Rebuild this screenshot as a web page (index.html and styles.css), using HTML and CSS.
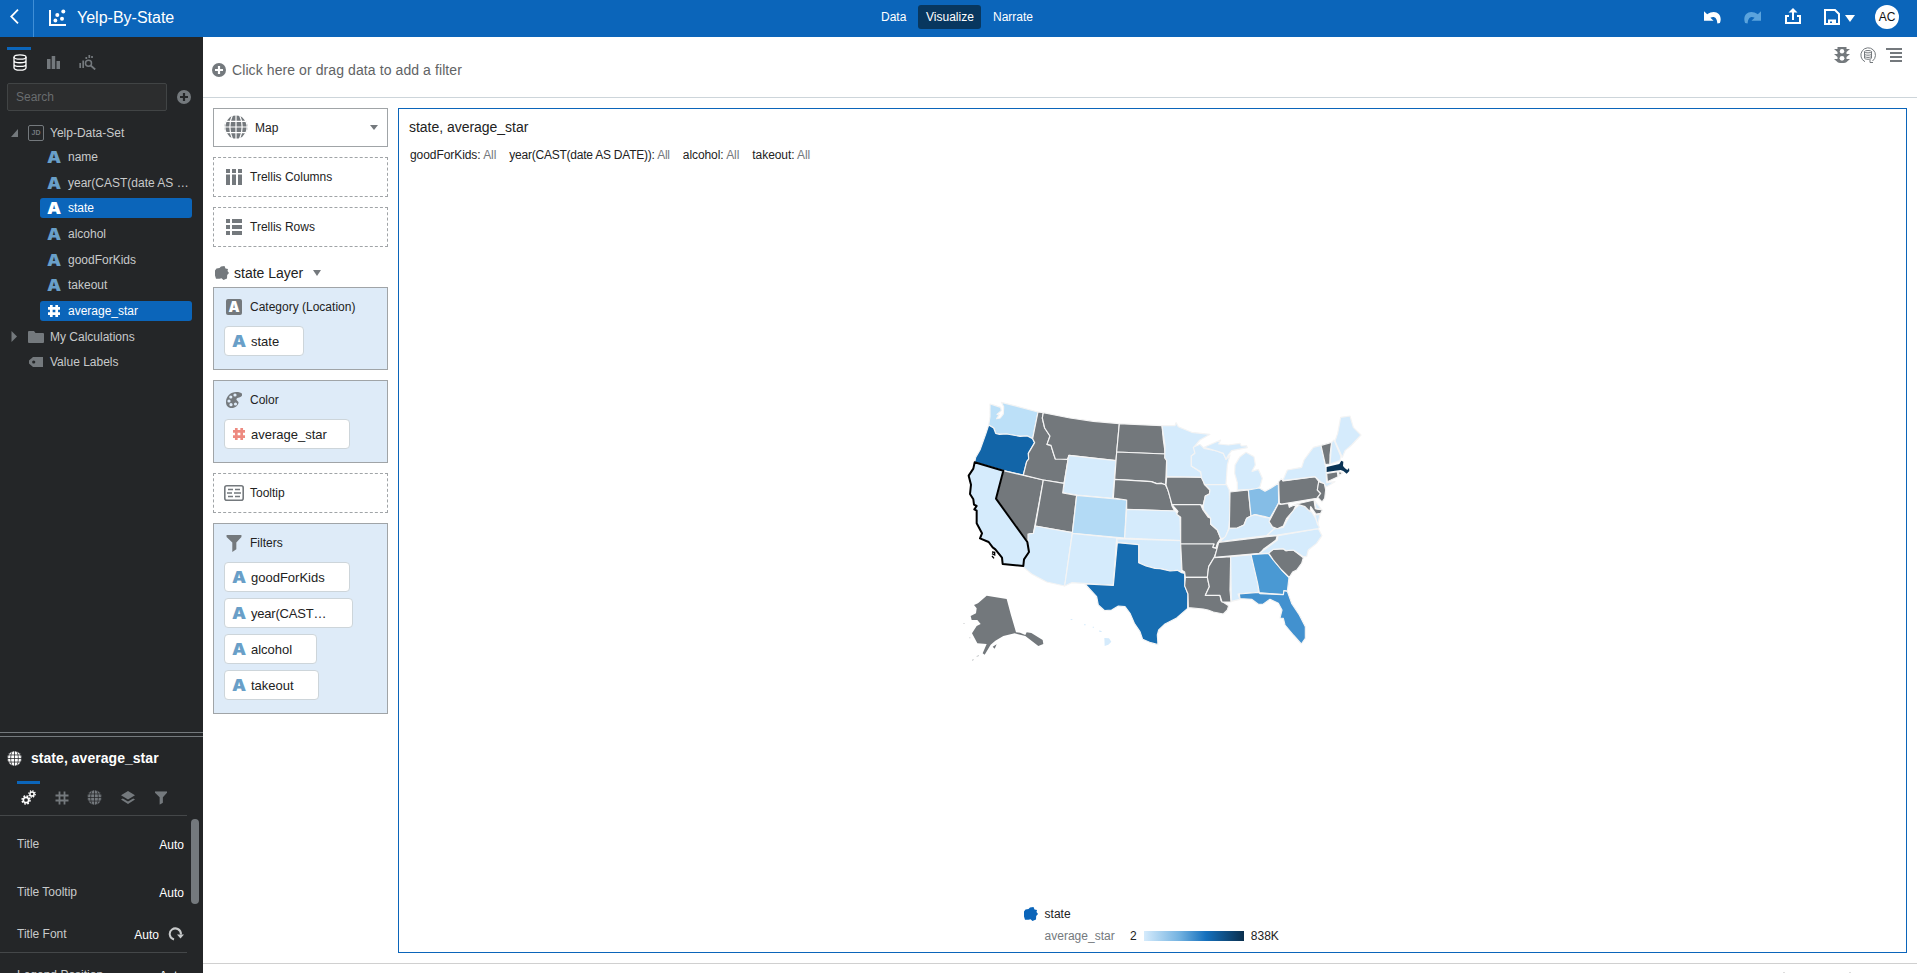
FILE: index.html
```html
<!DOCTYPE html>
<html lang="en">
<head>
<meta charset="utf-8">
<title>Yelp-By-State</title>
<link rel="stylesheet" href="styles.css">
</head>
<body>
<svg class="defs" aria-hidden="true">
  <symbol id="hash" viewBox="0 0 14 14"><path d="M4.300 1v12M9.700 1v12M1 4.300h12M1 9.700h12" fill="none" stroke="currentColor" stroke-width="2.700"/></symbol>
  <symbol id="globe" viewBox="0 0 24 24"><circle cx="12" cy="12" r="11.600" fill="currentColor"/><path d="M12 0v24M0 12h24M2 6.300h20M2 17.700h20M8.500 0C5 7 5 17 8.500 24M15.500 0C19 7 19 17 15.500 24M5 2C-.5 8-.5 16 5 22M19 2c5.500 6 5.500 14 0 20" fill="none" stroke="var(--cut)" stroke-width="1.200"/></symbol>
  <symbol id="plus" viewBox="0 0 14 14"><circle cx="7" cy="7" r="7" fill="currentColor"/><path d="M7 3v8M3 7h8" stroke="var(--cut)" stroke-width="2.200"/></symbol>
  <symbol id="blob" viewBox="0 0 14 14"><path d="M0 4.500 1.500 2.500 4.500 2 6 .5 9.500 0l1 2.500L13 3l-.5 2L14 7l-1.800 2-.2 3.500-3.500 1.500-2-1.800-2 .6H1L0 9.500z" fill="currentColor"/></symbol>
  <symbol id="funnel" viewBox="0 0 14 16"><path d="M0 0h14v1.800L9.200 7v6.500L5.400 16V7L0 1.800z" fill="currentColor"/></symbol>
  <symbol id="undo" viewBox="0 0 16 13"><path d="M0 1v9h9L6 7.300c3-2 6.200-.8 6.600 5.200l2.400-.4C18 4.500 11-1.500 3 4z" fill="currentColor"/></symbol>
</svg>
<header class="top">
  <div class="back"><svg width="9" height="15" viewBox="0 0 9 15"><path d="M8 .7 1.200 7.500 8 14.300" fill="none" stroke="#fff" stroke-width="1.800"/></svg></div>
  <svg class="logo" width="17" height="17" viewBox="0 0 17 17" fill="#fff"><path d="M0 1h2v14h15v2H0z"/><circle cx="6.400" cy="11.500" r="1.900"/><circle cx="8.300" cy="6" r="2"/><circle cx="13" cy="9.700" r="2"/><circle cx="14.300" cy="2.500" r="2"/></svg>
  <h1>Yelp-By-State</h1>
  <nav><a>Data</a><a class="on">Visualize</a><a>Narrate</a></nav>
  <div class="actions">
    <svg width="17" height="14"><use href="#undo"/></svg>
    <svg class="redo" width="17" height="14"><use href="#undo"/></svg>
    <svg class="share" width="16" height="16" viewBox="0 0 16 16"><path d="M4 8H1v7h14V8h-3M8 12V3" fill="none" stroke="#fff" stroke-width="2"/><path d="M8 0 3.500 4.500h9z" fill="#fff"/></svg>
    <svg class="save" width="16" height="16" viewBox="0 0 16 16" fill="none" stroke="#fff" stroke-width="2"><path d="M1 1h10l4 4v10H1zM5 15v-3.500h6V15M9 12v3"/></svg>
    <i class="caret"></i>
    <span class="avatar">AC</span>
  </div>
</header>
<div class="body">
<aside>
  <div class="tabs">
    <span class="on"><svg width="14" height="17" viewBox="0 0 14 17" fill="none" stroke="#fff" stroke-width="1.300"><ellipse cx="7" cy="3" rx="6" ry="2.200"/><path d="M1 3v10.700C1 17 13 17 13 13.700V3M1 6.500c0 3 12 3 12 0M1 10.200c0 3 12 3 12 0"/></svg></span>
    <span><svg width="13" height="13" viewBox="0 0 13 13" fill="#74797d"><path d="M0 3h3.500v10H0zM4.700 0h3.500v13H4.700zM9.500 5H13v8H9.500z"/></svg></span>
    <span><svg width="17" height="15" viewBox="0 0 17 15" fill="none" stroke="#74797d"><path d="M1.200 8v5M4.200 5.500V13M7.300 2v2M10.300 3V0M13 3V1" stroke-width="1.700"/><circle cx="9.500" cy="8.300" r="3" stroke-width="1.500"/><path d="m11.700 10.500 4.500 4" stroke-width="1.800"/></svg></span>
  </div>
  <div class="find"><div class="search">Search</div><svg class="add" width="14" height="14"><use href="#plus"/></svg></div>
  <div class="tree">
    <div class="node root"><svg width="7" height="8" viewBox="0 0 7 8"><path d="M7 0v8H0z" fill="#74797d"/></svg><b class="jd">JD</b><span>Yelp-Data-Set</span></div>
    <div class="leaf"><b class="a">A</b>name</div>
    <div class="leaf"><b class="a">A</b>year(CAST(date AS …</div>
    <div class="leaf sel"><b class="a">A</b>state</div>
    <div class="leaf"><b class="a">A</b>alcohol</div>
    <div class="leaf"><b class="a">A</b>goodForKids</div>
    <div class="leaf"><b class="a">A</b>takeout</div>
    <div class="leaf sel"><svg class="hash" width="14" height="14"><use href="#hash"/></svg>average_star</div>
    <div class="node"><svg width="7" height="11" viewBox="0 0 7 11"><path d="m.5 0 5.500 5.500L.5 11z" fill="#74797d"/></svg><svg width="16" height="12" viewBox="0 0 16 12"><path d="M0 1q0-1 1-1h5l1.500 2H15q1 0 1 1v8q0 1-1 1H1q-1 0-1-1z" fill="#74797d"/></svg><span>My Calculations</span></div>
    <div class="node"><i></i><svg width="16" height="10" viewBox="0 0 16 10"><path d="M5 0h10v10H5L1 6.500v-3z" fill="#74797d"/><circle cx="5.700" cy="5" r="1.600" fill="#242628"/></svg><span>Value Labels</span></div>
  </div>
  <div class="split"></div>
  <section class="props">
    <h2><svg width="15" height="15"><use href="#globe"/></svg>state, average_star</h2>
    <div class="ptabs">
      <span class="on"><svg width="15" height="15" viewBox="0 0 15 15" fill="none" stroke="#fff"><circle cx="5" cy="10" r="2.700" stroke-width="1.700"/><circle cx="5" cy="10" r="4" stroke-width="1.500" stroke-dasharray="1.700 1.450"/><circle cx="11" cy="4" r="2.100" stroke-width="1.500"/><circle cx="11" cy="4" r="3.200" stroke-width="1.300" stroke-dasharray="1.300 1.200"/></svg></span>
      <span><svg width="14" height="14" viewBox="0 0 14 14"><path d="M4.500.5v13M9.500.5v13M.5 4.500h13M.5 9.500h13" stroke="currentColor" stroke-width="1.800"/></svg></span>
      <span><svg width="15" height="15"><use href="#globe"/></svg></span>
      <span><svg width="14" height="14" viewBox="0 0 14 14" fill="currentColor"><path d="m7 0 7 4.200-7 4.200-7-4.200zM0 8.500l1.800-1L7 10.600l5.200-3.100 1.800 1L7 13z"/></svg></span>
      <span><svg width="12" height="14" viewBox="0 0 14 16"><use href="#funnel"/></svg></span>
    </div>
    <div class="scroll">
      <div class="rows">
        <div class="prow r1"><span>Title</span><b>Auto</b></div>
        <div class="prow r2"><span>Title Tooltip</span><b>Auto</b></div>
        <div class="prow r3"><span>Title Font</span><b>Auto</b><svg width="16" height="15" viewBox="0 0 16 15"><path d="M6 12.500C1 11 .5 5 4 2.500s9-.5 9 5" fill="none" stroke="#c8cacb" stroke-width="2"/><path d="M9 7.500h7l-3.500 4z" fill="#c8cacb"/></svg></div>
        <div class="prow r4"><span>Legend Position</span><b>Auto</b></div>
      </div>
      <div class="thumb"></div>
    </div>
  </section>
</aside>
<main>
  <div class="filterbar">
    <svg class="fplus" width="14" height="14"><use href="#plus"/></svg><span>Click here or drag data to add a filter</span>
    <div class="tools">
      <svg width="16" height="16" viewBox="0 0 16 16"><path d="M3.500 0h9v2L16 2l-3.500 3v2H16l-3.500 3v2H16l-4 3.500-2 .5H6l-2-.5L0 12h3.500v-2L0 7h3.500V5L0 2h3.500z" fill="#74797d"/><circle cx="8" cy="4.300" r="2.200" fill="#fff"/><circle cx="8" cy="11.300" r="2.400" fill="#fff"/></svg>
      <svg width="16" height="16" viewBox="0 0 16 16" fill="none" stroke="#74797d"><path d="M5 14.700A7.300 7.300 0 1 1 12.500 14M10 12.500v3h3"/><ellipse cx="8" cy="4.700" rx="3.500" ry="1.200"/><path d="M4.500 4.700V11c0 1.700 7 1.700 7 0V4.700M4.500 7c0 1.600 7 1.600 7 0M4.500 9.200c0 1.600 7 1.600 7 0"/></svg>
      <svg width="16" height="14" viewBox="0 0 16 14"><path d="M0 1h16M4 5h12M4 9h12M4 13h12" stroke="#74797d" stroke-width="2"/></svg>
    </div>
  </div>
  <div class="work">
    <div class="grammar">
      <div class="box type"><svg width="24" height="24"><use href="#globe"/></svg><span>Map</span><i class="caret"></i></div>
      <div class="box drop"><svg width="16" height="16" viewBox="0 0 16 16" fill="#74797d"><path d="M0 0h4v4H0zM6 0h4v4H6zM12 0h4v4h-4zM0 5.500h4V16H0zM6 5.500h4V16H6zM12 5.500h4V16h-4z"/></svg>Trellis Columns</div>
      <div class="box drop"><svg width="16" height="16" viewBox="0 0 16 16" fill="#74797d"><path d="M0 0h4v4H0zM0 6h4v4H0zM0 12h4v4H0zM6 0h10v4H6zM6 6h10v4H6zM6 12h10v4H6z"/></svg>Trellis Rows</div>
      <div class="layer"><svg width="14" height="14"><use href="#blob"/></svg>state Layer<i class="caret"></i></div>
      <div class="box full"><h3><b class="abox">A</b>Category (Location)</h3><div class="pill w79"><b class="a">A</b>state</div></div>
      <div class="box full"><h3><svg width="16" height="16" viewBox="0 0 16 16"><path d="M0 10C0 4 5 0 10 0c4 0 7 1 6 3.500C15 6 11 5 10.500 7c-.5 1.800 2.500 1.800 2 4-.7 3-4 5-7 5C2 16 0 13.500 0 10z" fill="#74797d"/><g fill="#deebf8"><circle cx="9" cy="3" r="1.600"/><circle cx="4.800" cy="5" r="1.600"/><circle cx="3" cy="9" r="1.600"/><circle cx="5" cy="12.700" r="1.600"/><circle cx="9.500" cy="12" r="1.600"/></g></svg>Color</h3><div class="pill w125"><svg class="hash" width="14" height="14"><use href="#hash"/></svg>average_star</div></div>
      <div class="box drop tip"><svg width="20" height="16" viewBox="0 0 20 16" fill="none" stroke="#74797d"><rect x=".8" y=".8" width="18.400" height="14.400" rx="2" stroke-width="1.600"/><path d="M4 4.500h5M11 4.500h5M3 8h5M10 8h7M4 11.500h5M11 11.500h5" stroke-width="1.500"/></svg>Tooltip</div>
      <div class="box full"><h3><svg class="fun" width="16" height="17"><use href="#funnel"/></svg>Filters</h3>
        <div class="pill w125"><b class="a">A</b>goodForKids</div>
        <div class="pill w129"><b class="a">A</b><span class="tight">year(CAST…</span></div>
        <div class="pill w92"><b class="a">A</b>alcohol</div>
        <div class="pill w94"><b class="a">A</b>takeout</div>
      </div>
    </div>
    <section class="canvas">
      <h2>state, average_star</h2>
      <p><span>goodForKids: <em>All</em></span><span>year(CAST(date AS DATE)): <em>All</em></span><span>alcohol: <em>All</em></span><span>takeout: <em>All</em></span></p>
      <svg class="map" width="410" height="280" viewBox="0 0 1230 840">
        <g class="st">
          <path class="c2" d="M90 42 104 46 122 52 124 62 111 73 118 74 110 86 121 84 130 72 131 50 124 37 160 46 234 66 218 146 202 138 180 139 140 132 118 133 107 130 101 114 86 105 90 80z"/>
          <path class="c5" d="M86 105 101 114 107 130 118 133 140 132 180 139 202 138 218 146 224 158 205 190 206 207 200 215 190 255 130 242 44 217 47 202 60 180 78 130z"/>
          <path class="n" d="M130 242 250 270 220 431 208 432 204 458 108 326z"/>
          <path class="n" d="M234 66 250 68 247 84 254 114 270 138 261 163 273 166 281 192 286 207 318 204 324 210 312 280 250 270 190 255 200 215 206 207 205 190 224 158 218 146z"/>
          <path class="n" d="M250 68 330 84 400 94 478 101 468 212 328 196 322 208 286 207 281 192 273 166 261 163 270 138 254 114 247 84z"/>
          <path class="c1" d="M326 196 468 212 458 325 350 315 308 308z"/>
          <path class="n" d="M250 270 312 280 308 309 350 316 337 428 226 408z"/>
          <path class="co" d="M350 316 500 330 494 444 337 430z"/>
          <path class="c1" d="M226 408 337 428 314 588 260 576 215 552 188 530 192 508 207 486 204 458 204 432 220 430z"/>
          <path class="c1" d="M337 430 470 444 460 586 380 581 335 578 314 588z"/>
          <path class="n" d="M478 101 540 104 606 107 610 150 616 192 470 186z"/>
          <path class="n" d="M470 186 616 192 620 206 617 282 622 292 604 280 590 281 574 275 464 268z"/>
          <path class="n" d="M464 268 574 275 590 281 604 280 616 284 624 300 632 328 636 348 644 363 500 358 500 330 460 324z"/>
          <path class="c1" d="M500 358 646 363 652 372 660 382 662 452 494 444z"/>
          <path class="c1" d="M470 446 662 452 665 548 652 541 630 543 600 536 585 535 558 528 536 518 536 464 472 458z"/>
          <path class="tx" d="M472 458 536 464 536 518 558 528 585 535 600 536 630 543 652 541 665 548 674 550 675 588 684 612 683 655 650 684 615 702 596 720 592 735 594 764 572 758 548 748 540 725 523 700 510 670 495 650 475 648 455 660 434 662 415 645 410 620 375 582 460 586z"/>
        </g>
        <g class="st" transform="translate(570 0)">
          <path class="c1" d="M36 107 75 107 78 98 85 110 125 127 180 133 150 150 133 170 135 190 124 198 124 228 150 245 158 262 50 260 50 212 44 204 45 166z"/>
          <path class="n" d="M50 261 158 262 163 283 180 300 178 312 166 318 160 345 66 344 55 304 48 285z"/>
          <path class="n" d="M66 344 152 344 158 358 175 382 182 385 182 402 202 420 212 445 202 460 198 474 188 472 192 462 92 462 92 382 80 373 84 364z"/>
          <path class="n" d="M92 462 192 462 188 472 202 476 192 504 176 530 172 562 106 562 104 546 96 541z"/>
          <path class="n" d="M106 562 172 562 178 590 166 616 210 616 213 632 236 647 232 660 220 672 190 666 174 660 160 657 115 653 114 612 104 588z"/>
          <path class="n" d="M192 503 242 500 240 600 243 636 216 636 210 616 166 616 178 590 172 562 176 530z"/>
          <path class="c1" d="M242 500 303 494 325 580 325 607 264 612 270 628 244 634z"/>
          <path class="c1" d="M130 172 150 163 162 175 200 183 220 190 228 208 240 195 232 225 228 283 165 284 155 265 152 245 124 228 124 198 135 190z"/>
          <path class="c1" d="M162 172 212 150 206 162 235 165 270 160 274 168 290 167 292 173 245 182 235 195 228 208 220 190 200 183z"/>
          <path class="c1" d="M262 300 262 278 254 250 255 225 270 200 288 187 312 200 316 225 306 244 325 238 337 265 330 290 320 297z"/>
          <path class="c1" d="M165 284 230 284 238 300 240 380 236 415 226 444 212 445 202 420 182 402 182 385 160 358 160 345 166 318 178 312 180 300z"/>
          <path class="n" d="M240 306 295 300 303 378 290 385 282 405 262 414 238 415z"/>
          <path class="c3" d="M295 300 328 294 345 304 362 295 385 280 386 338 374 360 360 384 345 380 315 374 303 378z"/>
          <path class="c1" d="M208 456 226 440 238 415 262 414 282 405 290 385 303 378 315 374 345 382 358 384 366 410 374 415 350 437 260 448z"/>
          <path class="n" d="M206 457 350 440 382 437 378 450 340 478 330 490 194 502z"/>
          <path class="c4" d="M303 494 355 490 370 510 395 540 417 563 412 604 402 602 400 614 328 608 323 580z"/>
          <path class="fl" d="M268 612 325 607 330 611 400 614 402 602 412 604 425 640 448 675 466 710 466 745 454 762 430 735 405 705 400 685 390 684 396 660 385 640 360 628 340 642 325 643 305 628 270 626z"/>
          <path class="n" d="M355 488 370 478 400 476 408 482 430 480 460 503 455 520 440 540 428 546 418 562 395 540 370 510z"/>
          <path class="c1" d="M328 490 345 478 382 450 384 437 505 416 516 437 500 460 475 480 470 500 460 500 430 480 408 482 400 476 370 478 355 490z"/>
          <path class="c1" d="M350 437 374 416 400 412 420 375 430 360 450 343 465 350 485 366 497 385 508 412 505 416 382 435z"/>
          <path class="n" d="M386 340 390 343 415 340 418 352 440 342 430 362 410 385 400 408 382 416 367 410 357 395 374 362z"/>
          <path class="n" d="M386 275 394 266 400 273 495 260 507 275 502 300 512 312 500 325 395 342 388 340z"/>
          <path class="c1" d="M398 272 412 240 455 232 462 210 490 172 513 166 520 195 528 235 530 278 555 275 530 290 522 285 495 260z"/>
          <path class="n" d="M513 166 545 157 540 195 540 222 526 224z"/>
          <path class="c1" d="M545 157 552 150 573 200 570 212 540 222z"/>
          <path class="c1" d="M555 153 563 130 572 82 600 78 610 112 633 135 605 165 585 182 577 202z"/>
          <path class="n" d="M530 250 562 245 564 260 532 275zM565 244 578 248 568 257z"/>
          <path class="n" d="M506 275 523 281 527 300 524 325 516 336 503 322 512 310 502 300z"/>
          <path class="n" d="M440 342 492 330 496 356 517 360 512 370 498 372 482 350 480 365 465 350z"/>
          <path class="c1" d="M494 332 514 358 498 356zM495 375 510 373 503 405z"/>
          <path class="ma" d="M530 231 568 222 574 212 580 215 579 228 585 235 592 240 597 234 598 243 590 251 580 243 572 240 555 242 530 246z"/>
        </g>
        <path class="n" d="M42 645 54 640 80 617 140 627 152 672 168 727 180 728 196 735 200 727 214 729 248 750 250 762 235 768 196 738 164 730 130 738 106 752 92 764 74 794 68 790 80 762 52 760 36 730 50 708 62 702 52 690 35 690 32 678 48 670 50 655zM98 770 110 763 104 776z"/>
        <path class="far" d="M10 700h4v2h-4zM28 742h3v3h-3zM50 798l7-3v3l-7 3zM36 809l5-2v3l-4 3z"/>
        <path class="c1" d="M433 744 447 745 454 755 445 764 434 768zM332 687h5v3h-5zM372 703h5v3h-5zM398 710h4v3h-4zM418 721l7 3v2h-7z"/>
        <path class="ca" d="M44 217 130 242 108 326 202 456 207 486 192 508 190 528 128 522 126 503 106 478 98 472 86 456 60 445 66 430 50 400 50 362 43 358 50 348 42 344 40 328 30 312 33 284 26 257 40 236z"/>
        <path class="isle" d="M96 486l8 1v8l-8-4M96 498l6 7"/>
      </svg>
      <div class="legend">
        <svg width="14" height="14"><use href="#blob"/></svg><span>state</span>
        <i></i><div class="scale"><em>average_star</em><span>2</span><i class="ramp"></i><span>838K</span></div>
      </div>
    </section>
  </div>
  <footer><i></i><i></i></footer>
</main>
</div>
</body>
</html>
```
FILE: styles.css
```css
* { box-sizing: border-box; margin: 0; padding: 0; }
body { width: 1917px; height: 973px; overflow: hidden; font: 12px "Liberation Sans", Arial, sans-serif; color: #222; background: #fff; display: flex; flex-direction: column; --cut: #fff; }
.defs { position: absolute; width: 0; height: 0; }
svg { display: block; flex: none; }
em { font-style: normal; }
i { display: block; }
.caret { border: 4px solid transparent; border-top: 5px solid #74797d; border-bottom: 0; }

.top { height: 37px; background: #0b65ba; color: #fff; display: flex; align-items: center; flex: none; }
.back { width: 34px; height: 37px; border-right: 1px solid #3f8ed6; padding: 9px 0 0 10px; }
.logo { margin: -3px 12px 0 15px; }
.top h1 { font-size: 16px; font-weight: 400; width: 795px; margin: -1px 1px 0 -1px; }
nav { display: flex; margin-top: -3px; }
nav a { height: 24px; line-height: 24px; padding: 0 8px; border-radius: 3px; margin-right: 4px; }
nav .on { background: #08375f; }
nav a:nth-child(1) { width: 41px; }
nav a:nth-child(2) { width: 63px; }
.actions { display: flex; align-items: center; margin: -3px 18px 0 auto; }
.redo { transform: scaleX(-1); color: #5aa3dd; margin: 0 24px 0 23px; }
.share { margin: -2px 23px 0 0; }
.actions .caret { border-width: 7px 5px 0; border-top-color: #fff; margin: 3px 20px 0 5px; }
.avatar { width: 24px; height: 24px; border-radius: 50%; background: #fff; color: #111; line-height: 24px; text-align: center; }

.body { display: flex; flex: 1; min-height: 0; }
aside { width: 203px; background: #242628; color: #c8cacb; --cut: #242628; display: flex; flex-direction: column; flex: none; overflow: hidden; }
.tabs { display: flex; padding: 10px 0 0 7px; gap: 10px; height: 46px; flex: none; }
.tabs span { width: 24px; height: 28px; border-top: 3px solid transparent; display: flex; align-items: center; justify-content: center; }
.tabs .on { padding-left: 2px; }
.tabs .on, .ptabs .on { border-top-color: #0b65ba; }
.find { display: flex; align-items: center; padding-left: 7px; flex: none; }
.search { width: 160px; height: 28px; border: 1px solid #414445; border-radius: 2px; background: #2c2d2e; color: #696c6e; padding-left: 8px; line-height: 26px; }
.add { color: #74797d; margin-left: 10px; }
.tree { padding: 12px 11px 0 0; height: 621px; flex: none; }
.leaf { height: 20px; line-height: 20px; margin: 0 0 5.700px 40px; padding-left: 7px; display: flex; align-items: center; border-radius: 3px; white-space: nowrap; }
.a { font: 900 16.500px/18px Inter, sans-serif; color: #699fc8; width: 14px; margin-right: 7px; display: flex; justify-content: center; transform: scaleX(1.08); }
.hash { margin-right: 7px; }
.sel { background: #0b65ba; color: #fff; }
.sel .a { color: #fff; }
.node { height: 20px; margin-bottom: 5.700px; display: flex; align-items: center; padding-left: 11px; }
.node.root { margin-bottom: 3.900px; }
.node > :first-child { width: 7px; margin-right: 10px; }
.node span { margin-left: 6px; }
.jd { width: 16px; height: 16px; border: 1.500px solid #74797d; border-radius: 2px; font-size: 7px; line-height: 13px; text-align: center; color: #74797d; }
.split { height: 5px; border-top: 1px solid #74797d; border-bottom: 1px solid #74797d; flex: none; }
.props { flex: none; }
.props h2 { height: 44px; display: flex; align-items: center; font-size: 14px; color: #fff; gap: 9px; padding: 0 0 2px 7px; letter-spacing: .04px; }
.ptabs { display: flex; gap: 10px; padding-left: 17px; width: 187px; height: 35px; border-bottom: 1px solid #444749; color: #74797d; }
.ptabs span { width: 23px; height: 30px; border-top: 3px solid transparent; display: flex; align-items: center; justify-content: center; }
.scroll { display: flex; }
.rows { width: 187px; }
.prow { display: flex; align-items: center; padding: 0 3px 0 17px; }
.prow span { flex: 1; }
.prow b { font-weight: 400; color: #fff; padding-top: 1px; }
.prow svg { margin-left: 9px; }
.r1 { height: 56px; }
.r2 { height: 40px; }
.r3 { height: 40px; border-bottom: 1px solid #444749; margin-top: 1px; padding-top: 3px; }
.r4 { height: 44px; }
.thumb { width: 8px; height: 85px; border-radius: 4px; background: #74797d; margin: 3px 0 0 4px; }

main { flex: 1; display: flex; flex-direction: column; min-width: 0; }
.filterbar { height: 61px; border-bottom: 1px solid #cdd5da; display: flex; align-items: center; font-size: 14px; letter-spacing: .09px; color: #616365; padding: 5px 15px 0 9px; flex: none; }
.fplus { color: #74797d; margin-right: 6px; }
.tools { margin: -29px 0 0 auto; display: flex; gap: 10px; align-items: center; }
.work { display: flex; gap: 10px; padding: 10px; height: 865px; flex: none; }
.grammar { width: 175px; }
.box { border: 1px solid #a0a4a7; margin-bottom: 10px; }
.type { height: 39px; display: flex; align-items: center; padding: 0 9px 0 10px; gap: 7px; }
.type svg { color: #74797d; margin-top: -2px; }
.type span { flex: 1; }
.drop { height: 40px; border-style: dashed; display: flex; align-items: center; padding-left: 12px; gap: 8px; }
.tip { padding-left: 10px; gap: 6px; }
.layer { display: flex; align-items: center; height: 30px; font-size: 14px; padding: 2px 0 0 2px; gap: 5px; }
.layer svg { color: #74797d; }
.layer .caret { margin-left: 5px; border-width: 6px 4.500px 0; }
.full { background: #deebf8; padding: 9px 0 7px 10px; --cut: #deebf8; }
.full h3 { font-size: 12px; font-weight: 400; height: 20px; margin-bottom: 9px; display: flex; align-items: center; gap: 8px; padding-left: 2px; }
.full h3 svg { color: #74797d; }
.abox { width: 16px; height: 16px; background: #74797d; color: #fff; border-radius: 2px; font: 900 14px/16px Inter, sans-serif; text-align: center; }
.pill { height: 30px; border: 1px solid #cdd5da; border-radius: 4px; background: #fff; display: flex; align-items: center; padding-left: 7px; font-size: 13px; margin-bottom: 6px; }
.pill .a, .pill .hash { margin-right: 5px; }
.pill .hash { color: #ed8a80; }
.tight { letter-spacing: -.2px; }
.w79 { width: 80px; } .w92 { width: 93px; } .w94 { width: 95px; } .w125 { width: 126px; } .w129 { width: 129px; }
.canvas { flex: 1; border: 1px solid #0b65ba; }
.canvas h2 { font-size: 14px; font-weight: 400; padding: 10px 0 0 10px; height: 39px; letter-spacing: -.03px; }
.canvas p { display: flex; gap: 13px; padding-left: 11px; height: 242px; letter-spacing: -.07px; }
.canvas p span:nth-child(2) { letter-spacing: -.23px; }
.canvas em { color: #74797d; }
.map { margin-left: 561px; }
.st { stroke: #f4f4f4; stroke-width: 3.500; stroke-linejoin: round; }
.n { fill: #73787c; } .c1 { fill: #d5ebfc; } .c2 { fill: #bce0f8; } .c3 { fill: #85bde6; } .c4 { fill: #4a99d3; } .c5 { fill: #1265a8; }
.co { fill: #b3daf5; } .tx { fill: #176db1; } .fl { fill: #4291cf; } .ma { fill: #0b3455; stroke: none; } .far { fill: #c4c7c9; }
.ca { fill: #d5ebfc; stroke: #000; stroke-width: 6; stroke-linejoin: round; }
.isle { fill: none; stroke: #000; stroke-width: 4; }
.legend { display: grid; grid-template-columns: 14px auto; column-gap: 7px; row-gap: 8px; margin: 237px 0 0 624.600px; color: #0b65ba; align-items: center; }
.legend span { color: #222; }
.scale { display: flex; align-items: center; }
.scale em { width: 85.500px; color: #74797d; }
.ramp { width: 100px; height: 10px; margin: 0 7px; background: linear-gradient(90deg, #d5ebfc, #74b3e1 35%, #1470bd 62%, #0b2f4d); }
footer { border-top: 1px solid #d0d0d0; flex: 1; display: flex; gap: 64px; align-items: flex-end; justify-content: flex-end; padding-right: 66px; }
footer i { width: 2px; height: 1px; background: #ddd; }
```
